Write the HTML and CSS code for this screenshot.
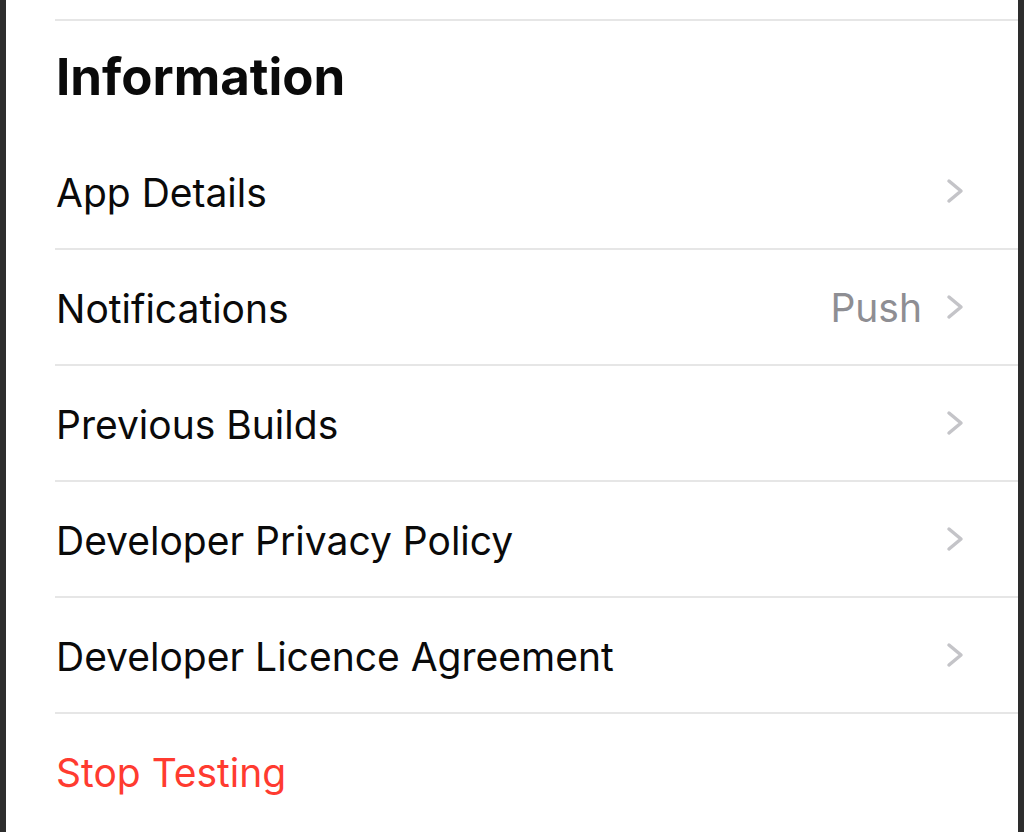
FILE: index.html
```html
<!DOCTYPE html>
<html>
<head>
<meta charset="utf-8">
<link rel="stylesheet" href="styles.css">
</head>
<body>
<div class="frame">
  <div class="content">
    <div class="topline"></div>
    <div class="title">Information</div>
    <div class="row"><span class="label">App Details</span><span class="right"><svg class="chev" viewBox="0 0 18 26"><path d="M3 3 L15 13 L3 23"/></svg></span></div>
    <div class="row"><span class="label">Notifications</span><span class="right"><span class="value">Push</span><svg class="chev" viewBox="0 0 18 26"><path d="M3 3 L15 13 L3 23"/></svg></span></div>
    <div class="row"><span class="label">Previous Builds</span><span class="right"><svg class="chev" viewBox="0 0 18 26"><path d="M3 3 L15 13 L3 23"/></svg></span></div>
    <div class="row"><span class="label">Developer Privacy Policy</span><span class="right"><svg class="chev" viewBox="0 0 18 26"><path d="M3 3 L15 13 L3 23"/></svg></span></div>
    <div class="row"><span class="label">Developer Licence Agreement</span><span class="right"><svg class="chev" viewBox="0 0 18 26"><path d="M3 3 L15 13 L3 23"/></svg></span></div>
    <div class="row last"><span class="label danger">Stop Testing</span></div>
  </div>
</div>
</body>
</html>
```
FILE: styles.css
```css
html, body {
  margin: 0;
  padding: 0;
  background: #2d2d2d;
}
.frame {
  box-sizing: border-box;
  width: 1024px;
  height: 832px;
  border-left: 6px solid #2d2d2d;
  border-right: 6px solid #2d2d2d;
  background: #ffffff;
  overflow: hidden;
  font-family: "Inter", "Liberation Sans", sans-serif;
  color: #0a0a0a;
}
.content {
  padding-left: 49px;
}
.topline {
  margin-top: 19px;
  height: 2px;
  background: #e6e6e6;
}
.title {
  height: 113px;
  box-sizing: border-box;
  padding-top: 26px;
  padding-left: 1px;
  font-size: 51px;
  font-weight: 700;
  line-height: 60px;
}
.row {
  height: 114px;
  border-bottom: 2px solid #e6e6e6;
  display: flex;
  align-items: center;
  justify-content: space-between;
  padding-left: 1px;
  padding-right: 54px;
}
.row.last {
  border-bottom: none;
}
.label {
  font-size: 39px;
  padding-top: 2px;
}
.danger {
  color: #ff3b30;
}
.right {
  display: flex;
  align-items: center;
  gap: 24px;
}
.value {
  font-size: 39px;
  color: #8e8e93;
}
.chev {
  width: 18px;
  height: 26px;
  fill: none;
  stroke: #c4c4c8;
  stroke-width: 3.5;
  stroke-linecap: round;
  stroke-linejoin: round;
}
```
